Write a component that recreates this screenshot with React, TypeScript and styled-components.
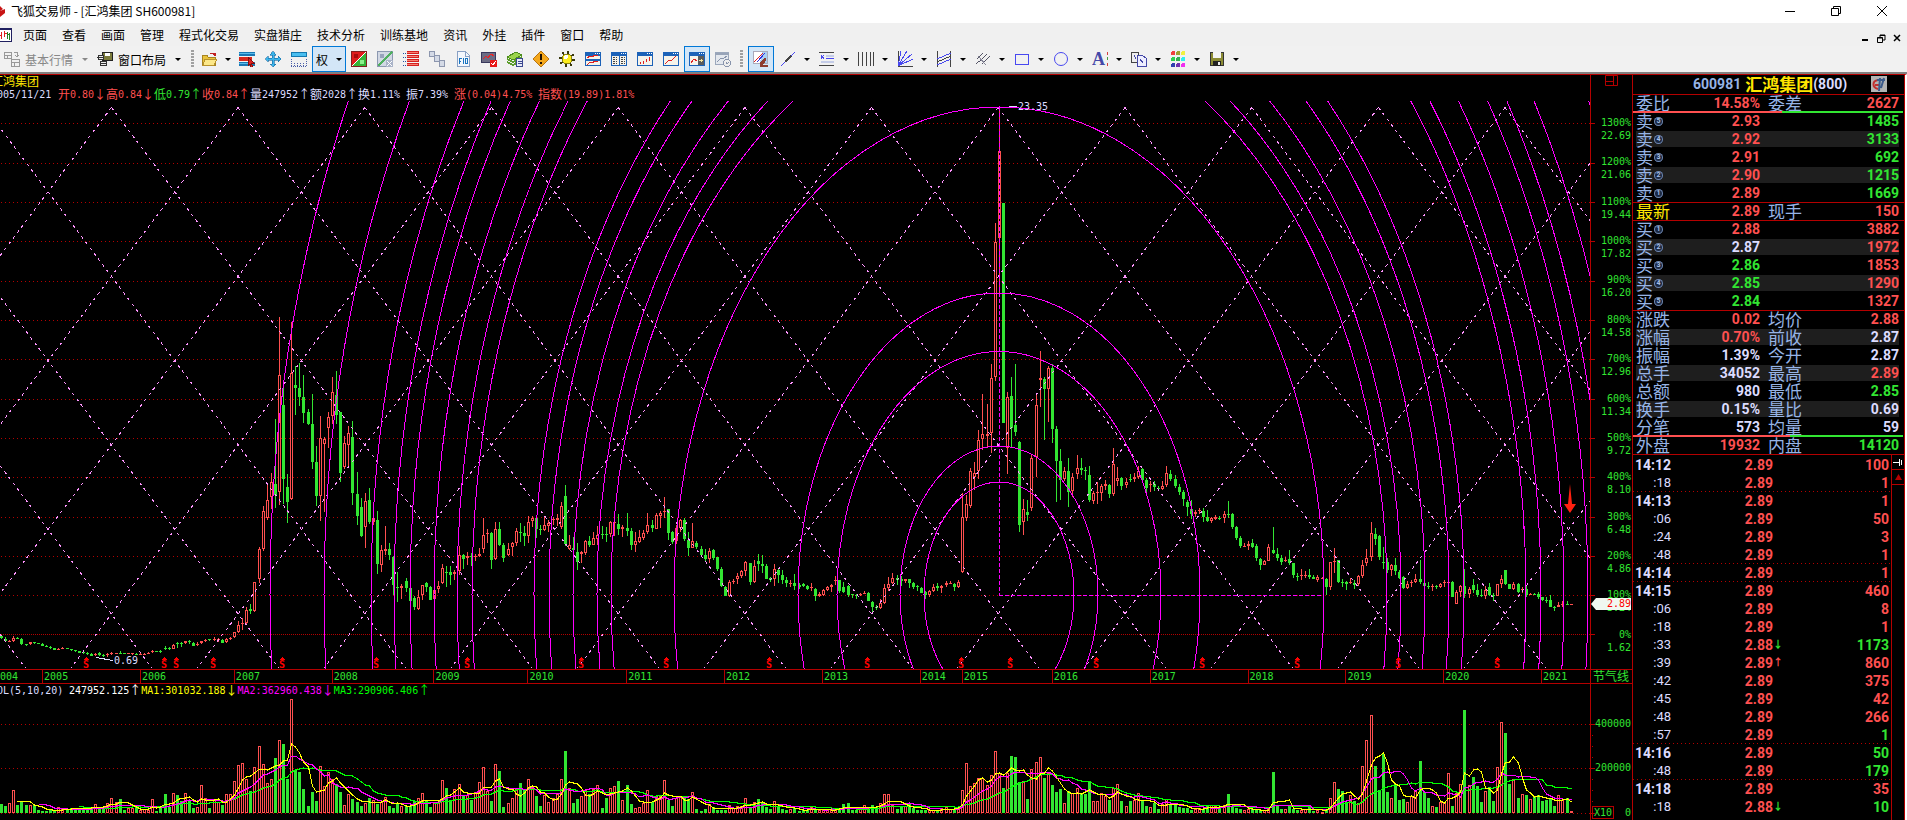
import React from 'react';
import styled, { createGlobalStyle } from 'styled-components';

/* ---------- palette ---------- */
const RED = '#ff5050';
const GREEN = '#32e632';
const PALE = '#dcdcff';
const BLUE = '#96b4e6';
const FRAME = '#b40000';
const MAGENTA = '#ff00ff';
const CJK = '"Noto Sans CJK SC", sans-serif';
const MONO = '"DejaVu Sans Mono", "Noto Sans CJK SC", monospace';
const tones = { red: RED, green: GREEN, pale: PALE, blue: BLUE, yellow: '#ffe600', gold: '#ffff00', magenta: MAGENTA, lime: '#00ff00', white: '#ffffff' };
type Tone = keyof typeof tones;

/* ---------- half-month bars: colour, high, body top, body bottom, low, volume ---------- */
type YearData = { year: string; x: number; bars: string };
const YEARS: YearData[] = [
  { year: '2004', x: 1, bars: 'g588 588 594 598 27,g592 596 603 606 21,r600 603 604 607 30,r588 595 602 606 68,g591 594 596 598 25,g594 597 612 614 32,g611 612 615 618 24,r606 607 613 615 23,g605 607 609 612 23,g608 609 611 612 9' },
  { year: '2005', x: 42, bars: 'g609 612 617 618 6,g615 617 620 622 6,g618 620 624 626 9,g623 625 629 630 5,r624 626 629 630 17,r621 624 627 628 15,g623 624 627 628 11,g626 627 630 632 16,g629 631 634 636 12,g632 634 638 639 15,g635 637 640 641 15,g637 639 642 645 12,g640 642 647 648 14,r639 641 645 647 28,g636 640 646 648 19,g642 645 648 650 14,r640 643 646 650 29,r636 640 642 644 44,r638 640 642 643 34,g634 639 641 642 42,g638 639 641 642 9,r638 640 642 643 14,r638 640 642 644 14,g639 641 643 644 18' },
  { year: '2006', x: 140, bars: 'r640 642 644 645 8,r640 642 644 645 12,r637 639 641 643 10,r630 633 637 640 41,g632 633 636 637 6,g630 633 635 638 15,g617 624 627 630 56,g621 624 627 629 18,r613 616 626 628 59,g605 609 613 625 53,g606 609 612 620 37,r602 604 608 612 59,g600 603 606 611 35,g606 608 617 618 15,r606 611 616 618 17,r602 604 608 612 83,r596 600 604 607 44,g596 598 600 603 15,r591 596 599 602 41,r595 598 600 605 34,g596 600 608 610 24,r594 597 607 609 56,r590 593 598 600 56' },
  { year: '2007', x: 234, bars: 'r575 577 592 595 95,r543 556 577 580 143,r534 549 552 570 149,r501 510 548 552 103,g492 507 513 522 66,r425 427 514 516 137,r320 328 418 428 200,r198 213 326 334 147,r131 181 233 240 89,r98 126 172 208 103,g-62 133 164 205 165,r-369 -195 157 195 218,g-174 -105 117 192 207,g101 141 185 248 102,r-353 -200 176 181 341,g-222 -165 -157 -75 128,g-231 -156 -130 -102 123,g-195 -129 -82 -52 72,g-93 -84 -49 -46 21,g-138 -48 66 86 63,g18 66 168 198 36,r-72 -6 167 243 140,r-10 -3 11 215 81,r-84 -69 -37 23 123' },
  { year: '2008', x: 332, bars: 'r-189 -143 -71 -47 101,g-207 -135 -76 -49 87,g-84 -84 98 126 63,r-12 9 80 88 23,r-42 -21 14 78 56,g-57 -9 158 194 42,g96 162 228 255 33,g173 202 288 291 21,r158 183 261 324 29,g144 180 246 252 45,r219 233 246 256 39,g213 240 372 402 27,r314 330 375 396 32,r257 328 332 345 47,g309 327 345 360 21,g348 350 434 465 15,g395 441 443 486 29,r431 438 445 476 20,g414 423 444 455 21,g420 444 482 488 21,g467 474 501 510 35,r450 470 508 510 46,r434 436 465 480 59,g426 429 441 456 39,g437 441 480 480 18' },
  { year: '2009', x: 434, bars: 'r443 450 477 480 29,r423 438 448 459 30,r371 384 430 432 98,g378 396 398 441 75,g377 396 405 435 39,r390 396 403 420 71,r318 346 394 405 86,g341 344 357 387 51,r336 348 354 375 55,g339 347 350 378 39,r342 347 350 362 63,r324 341 347 352 92,r234 285 328 339 137,r266 280 283 309 65,g276 279 359 387 36,r246 266 356 360 146,g245 266 315 318 126,g309 314 354 366 18,r310 326 344 348 29,r305 309 322 348 44,r264 273 310 317 71,g248 276 279 306 90,g257 279 288 317 71' },
  { year: '2010', x: 528, bars: 'r227 246 287 308 101,r228 235 244 261 76,g233 235 267 294 51,g254 266 269 285 21,r228 255 271 273 53,r240 248 258 275 33,r231 236 240 255 44,r222 235 240 258 57,r185 198 261 267 101,g135 168 312 318 186,r285 314 326 329 74,g290 324 330 360 30,g309 336 366 389 42,r333 337 341 368 50,r300 303 339 345 69,g288 302 315 322 57,r276 294 314 315 71,r258 284 296 315 83,g257 281 284 297 15,g261 282 286 306 45,r243 245 283 290 74,r242 245 250 288 80,g222 252 267 285 96,r254 262 268 291 39' },
  { year: '2011', x: 627, bars: 'g218 264 272 288 84,g263 273 315 330 27,r275 304 315 335 14,r269 291 307 308 17,r269 280 294 300 29,r219 255 276 282 68,g239 254 264 275 32,r219 225 266 267 50,r212 219 227 264 51,r170 212 216 233 98,g207 207 279 300 39,g272 276 306 312 21,r255 264 302 311 44,r237 240 264 275 47,g235 239 296 303 45,g276 300 324 348 42,r249 303 323 324 62,g303 309 321 326 12,g319 327 345 350 6,g326 345 358 366 12,r323 333 356 369 26,g326 330 353 360 18,g350 350 387 393 9,g380 387 438 440 9' },
  { year: '2012', x: 725, bars: 'g438 440 467 468 9,r419 427 467 470 23,r417 424 427 432 14,r399 408 416 432 20,r390 394 407 413 20,r362 366 394 408 44,g368 369 427 435 15,r361 378 426 428 32,g342 363 372 392 41,g345 372 378 399 33,g371 378 416 418 18,g411 414 419 425 12,r372 388 416 437 35,g386 390 405 429 21,g390 405 420 433 12,g411 420 430 441 9,r420 428 432 440 11,g402 428 438 450 15,g430 434 442 446 6,g429 432 438 441 9,g434 438 447 450 9,r428 441 444 452 17,g444 446 468 483 9,r455 461 468 471 9' },
  { year: '2013', x: 823, bars: 'r446 450 464 467 11,r437 441 450 452 9,r432 435 440 455 12,r408 420 422 435 11,g420 420 452 458 12,g426 441 455 460 28,g434 437 464 470 30,g461 462 466 473 9,g461 464 466 476 9,r458 461 465 468 15,r453 458 460 462 23,g456 458 482 484 12,g483 485 500 518 24,g496 500 504 509 18,r478 488 503 506 29,r432 444 488 492 56,r411 432 444 452 56,r399 414 430 433 23,g405 413 420 434 12,g408 418 424 438 20,r416 418 422 430 21,g417 418 430 444 27,g426 429 441 447 15,g435 438 441 453 9' },
  { year: '2014', x: 921, bars: 'g442 445 458 460 9,g452 455 466 476 9,r450 454 465 470 9,r432 442 453 456 10,g430 438 444 453 9,r434 438 443 459 14,r424 429 436 440 18,r424 429 431 433 12,g428 432 441 452 12,r420 426 440 443 17' },
  { year: '2015', x: 962, bars: 'r160 232 396 398 68,r165 192 234 242 149,r84 94 198 204 80,r67 99 110 150 89,r-30 0 94 116 104,r-139 -17 -2 30 104,r-109 -17 -13 25 84,r-228 -185 -20 38 113,r-651 -593 -188 -177 185,r-997 -866 -605 -440 119,g-711 -711 -52 -52 75,r-144 -129 25 101 119,g-189 -132 -37 23 171,g-228 -45 -25 -12 168,g3 6 254 275 93,r177 207 246 284 95,g180 216 225 242 42,r46 53 203 212 131,r-138 -105 50 111 152,r-267 -185 -179 -100 167,g-190 -183 -154 0 105,r-222 -215 -154 -55 119' },
  { year: '2016', x: 1052, bars: 'g-228 -216 -34 8 84,g-42 -33 63 186 63,g27 64 120 180 72,r80 94 116 122 29,g55 94 155 201 65,r98 110 152 170 59,r45 85 103 116 74,g54 85 90 105 57,g82 90 92 120 57,g78 105 180 185 94,r154 158 182 191 35,r126 155 160 192 35,r132 138 160 183 59,r120 133 139 150 50,g133 135 162 175 39,r24 73 161 168 74,r82 115 122 138 87,g112 115 138 150 36,r114 126 136 144 20,g102 117 119 126 35,r100 111 116 126 38,r79 92 110 117 59,g84 88 120 125 39,g114 121 144 155 21' },
  { year: '2017', x: 1150, bars: 'r124 132 134 155 17,g123 132 140 153 29,g138 144 147 153 12,r123 137 147 150 26,r78 100 135 140 41,g90 101 116 122 27,g105 118 138 144 24,g132 140 156 165 18,g150 157 177 198 15,g180 186 200 228 15,g180 207 222 237 9,r210 216 222 230 11,r204 210 212 222 14,g204 213 231 245 12,g210 232 242 246 24,r230 234 243 249 23,r225 232 236 240 20,g228 233 236 240 18,r213 222 235 249 23,g183 222 226 235 57,g219 222 261 266 21,g258 261 293 300 15,g288 293 318 323 12,r309 318 320 321 9' },
  { year: '2018', x: 1248, bars: 'r304 312 318 330 12,g297 310 320 324 12,g312 318 354 362 9,g354 356 375 390 9,r360 363 374 375 8,r312 321 362 364 11,g261 330 339 342 123,g324 342 354 362 21,g345 354 366 374 12,r350 360 364 366 12,g330 357 369 376 23,g368 369 405 414 12,g399 408 411 423 9,r387 404 408 420 9,r393 404 407 414 12,g387 405 410 416 18,g404 411 416 418 6,r405 411 420 426 8,r411 414 416 418 3,g415 417 440 465 9,r366 367 441 450 44,r324 362 366 398 92,g360 360 427 430 72,g418 426 429 441 65' },
  { year: '2019', x: 1346, bars: 'g423 427 431 450 33,r414 426 429 432 53,g420 429 434 446 36,r405 408 431 438 29,r360 374 408 414 140,r328 354 370 378 218,r246 280 350 362 293,g264 282 297 315 141,g285 288 351 360 69,g320 366 369 387 178,g354 367 390 400 63,r372 376 390 408 44,g354 375 392 405 87,g390 396 414 418 39,g408 411 443 447 42,r423 432 444 447 32,r420 427 430 440 50,r402 416 427 430 68,g360 417 427 432 156,g425 429 438 441 63,g425 437 440 447 45,r432 438 440 452 20,g435 438 441 446 18,r430 432 440 444 32' },
  { year: '2020', x: 1444, bars: 'r421 426 430 441 30,r411 426 428 430 119,g423 426 470 470 21,r450 456 491 491 59,r436 438 456 471 86,g387 438 462 474 309,r441 447 462 474 83,g417 434 449 458 108,g432 450 464 470 81,g447 464 466 471 33,r438 449 467 476 65,g429 441 466 468 78,g460 465 469 482 36,r431 433 467 468 137,r405 417 432 444 272,g390 390 432 436 240,g431 432 446 448 87,r426 432 448 450 101,g429 432 456 459 45,r440 448 450 460 56,g438 447 464 471 54,r459 462 464 466 41,g459 462 464 466 48,g456 462 470 476 54' },
  { year: '2021', x: 1542, bars: 'g471 472 480 483 36,g471 480 483 489 39,g465 480 500 500 45,g497 501 505 513 21,r486 495 500 501 53,r483 491 494 500 40,g483 491 494 495 45,r492 492 494 494 5' },
];

const PANE_W = 1590;
const STEP = 49 / 12;
const BASE = 813;
const toY = (v: number) => Math.round(440 + v / 3);

const BARS = YEARS.flatMap(({ x, bars }) =>
  bars.split(',').map((item, i) => {
    const [high, top, bottom, low, volume] = item.slice(1).split(' ').map(Number);
    return { up: item[0] === 'r', x: Math.round(x + i * STEP), high: toY(high), top: toY(top), bottom: toY(bottom), low: toY(low), volume };
  })
);

const average = (n: number) =>
  BARS.slice(n - 1)
    .map((bar, i) => {
      const sum = BARS.slice(i, i + n).reduce((total, b) => total + b.volume, 0);
      return `${bar.x + 0.5},${Math.round(BASE - sum / n / 3)}`;
    })
    .join(' ');

const LEVELS = [
  ['1300%', '22.69'], ['1200%', '21.06'], ['1100%', '19.44'], ['1000%', '17.82'], ['900%', '16.20'], ['800%', '14.58'], ['700%', '12.96'],
  ['600%', '11.34'], ['500%', '9.72'], ['400%', '8.10'], ['300%', '6.48'], ['200%', '4.86'], ['100%', '3.24'], ['0%', '1.62'],
];
const GRID_Y = [123, 163, 202, 241, 281, 320, 359, 399, 438, 477, 517, 556, 595, 634];
const RADII = [75, 99, 162, 201, 325, 388, 402, 426, 450, 465, 527, 542, 565, 589, 605, 628, 675, 729];
const DIVIDENDS = [86, 164, 176, 213, 282, 376, 467, 581, 666, 769, 867, 961, 1010, 1096, 1202, 1297, 1398, 1497];

/* ---------- shell ---------- */
const Global = createGlobalStyle`
  * { box-sizing: border-box; }
  body { margin: 0; background: #fff; font-family: ${CJK}; }
  button { font: inherit; color: inherit; border: 0; background: none; padding: 0; }
`;
const Window = styled.div`
  display: flex; flex-direction: column; height: 100vh; overflow: hidden; font-size: 12px; color: #000;
`;
const TitleBar = styled.header`
  display: flex; align-items: flex-start; flex: 0 0 23px; background: #fff;
`;
const TitleMark = styled.svg`
  margin-top: 5px;
`;
const AppTitle = styled.h1`
  flex: 1; margin: 0 0 0 6px; font-size: 12px; font-weight: 400; line-height: 22px;
`;
const CaptionButton = styled.button`
  display: grid; place-items: center; width: 46px; height: 21px;
  &:last-child { margin-right: 2px; }
`;
const MenuBar = styled.nav`
  display: flex; align-items: center; flex: 0 0 23px; background: #f0f0f0; gap: 15px;
`;
const MenuMark = styled.svg`
  margin-right: -4px;
`;
const MenuItem = styled.button`
  line-height: 22px; white-space: nowrap;
`;
const ChildControls = styled.div`
  display: flex; align-items: center; margin-left: auto; padding: 7px 2px 0 0;
`;
const ChildButton = styled.button`
  display: grid; place-items: center; width: 16px; height: 16px;
`;
const Toolbar = styled.div`
  display: flex; align-items: center; flex: 0 0 28px; background: #f1f1f1; border-bottom: 2px solid #808080;
`;
const ToolGroup = styled.div`
  display: flex; align-items: center;
`;
const Tool = styled.button<{ $on?: boolean; $w?: number }>`
  display: flex; align-items: center; justify-content: ${(p) => (p.$w ? 'flex-end' : 'center')}; gap: 4px; width: ${(p) => p.$w ?? 26}px; height: 26px;
  ${(p) => (p.$on ? 'background: #d3e6f7; border: 1px solid #0078d7;' : '')}
  svg { flex: none; }
`;
const TextTool = styled(Tool)<{ $dim?: boolean }>`
  justify-content: flex-start; gap: 5px; padding-left: 4px; white-space: nowrap; color: ${(p) => (p.$dim ? '#888' : '#000')};
`;
const Caret = styled.i<{ $dim?: boolean }>`
  flex: none; margin: 0 3px 0 4px; border: 3px solid transparent; border-top-color: ${(p) => (p.$dim ? '#888' : '#000')}; border-bottom: 0;
`;
const Grip = styled.span`
  width: 3px; height: 18px; margin: 0 5px 0 4px; background: repeating-linear-gradient(#a0a0a0 0 2px, transparent 2px 3px);
`;

/* ---------- workspace ---------- */
const Workspace = styled.main`
  display: flex; flex: 1; min-height: 0; border-top: 1px solid ${FRAME}; background: #000; border-right: 2px solid #fff;
`;
const Charts = styled.section`
  display: flex; flex-direction: column; flex: 1; min-width: 0;
`;
const Pane = styled.div<{ $fixed?: boolean }>`
  display: flex; flex: ${(p) => (p.$fixed ? '0 0 136px' : '1')}; min-height: 0;
`;
const Plot = styled.div`
  display: flex; flex-direction: column; flex: 1; min-width: 0; border-right: 1px solid ${FRAME};
`;
const Drawing = styled.svg`
  display: block; width: 100%; flex: 1; min-height: 0; overflow: visible;
`;
const Clip = styled.div`
  overflow: hidden; flex: none;
`;
const Readout = styled.div`
  display: flex; margin-left: -9px; height: 13px; line-height: 12px; white-space: pre; color: ${PALE}; font-size: 12px;
`;
const Reading = styled.span<{ $tone: Tone; $w?: number }>`
  display: flex; flex: none; ${(p) => (p.$w ? `width: ${p.$w}px;` : '')} color: ${(p) => tones[p.$tone]};
`;
const Num = styled.span`
  font-family: ${MONO}; font-size: 10px; line-height: 14px;
`;
const Axis = styled.div`
  position: relative; flex: 0 0 42px; display: flex; flex-direction: column; border-right: 1px solid ${FRAME};
  color: ${GREEN}; font-family: ${MONO}; font-size: 10px; line-height: 13px; text-align: right;
`;
const LevelList = styled.div`
  flex: 1; display: grid; grid-template-rows: repeat(14, 1fr); padding: 29px 1px 2px 0;
`;
const Level = styled.div`
  display: flex; flex-direction: column;
`;
const PriceTag = styled.div`
  position: absolute; right: 1px; top: 523px; width: 40px; height: 12px; line-height: 12px; background: #f0f8f0; color: #f00;
  clip-path: polygon(0 50%, 5px 0, 100% 0, 100% 100%, 5px 100%);
`;
const AxisIcon = styled.div`
  display: flex; justify-content: center; height: 12px;
`;
const TimeAxis = styled.div`
  display: flex; flex: 0 0 15px; border: solid ${FRAME}; border-width: 1px 0; line-height: 12px; color: ${GREEN};
`;
const Years = styled.div`
  display: flex; flex: 1; min-width: 0; overflow: hidden; border-right: 1px solid ${FRAME};
`;
const Year = styled.span<{ $grow: number; $first: boolean }>`
  flex: ${(p) => p.$grow} 0 0; min-width: 0; padding-left: 1px; font-family: ${MONO}; font-size: 10px; line-height: 13px;
  ${(p) => (p.$first ? 'text-indent: -7px;' : `border-left: 1px solid ${FRAME};`)}
`;
const AxisName = styled.span`
  flex: 0 0 42px; padding-left: 2px; border-right: 1px solid ${FRAME};
`;
const VolumeScale = styled.div`
  flex: 1; display: flex; flex-direction: column; padding: 33px 1px 0 0;
`;
const VolumeLevel = styled.span`
  flex: 0 0 44px;
`;
const VolumeFoot = styled.div`
  display: flex; justify-content: space-between; padding: 1px 0 0 1px;
`;
const Unit = styled.span`
  border: 1px solid ${FRAME}; padding: 0 1px; line-height: 11px;
`;

/* ---------- quote panel ---------- */
const Quote = styled.aside`
  display: flex; flex-direction: column; flex: 0 0 272px; border-right: 1px solid ${FRAME}; color: ${PALE}; font-family: Roboto, ${CJK};
`;
const QuoteHead = styled.div`
  display: flex; align-items: center; flex: 0 0 20px; margin-bottom: -1px; padding: 0 17px 1px 60px; border-bottom: 1px solid ${FRAME};
  font-size: 14px; font-weight: 700; line-height: 18px;
`;
const Code = styled.span`
  color: ${BLUE}; margin-right: 4px;
`;
const StockName = styled.h2`
  margin: 0; color: #ffe600; font-size: 17px; font-weight: 700; line-height: 16px; font-family: ${CJK};
`;
const Sector = styled.span`
  flex: 1;
`;
const Sheet = styled.table<{ $line?: boolean }>`
  display: block; flex: none; border-bottom: ${(p) => (p.$line === false ? 0 : 1)}px solid ${FRAME}; margin-bottom: ${(p) => (p.$line === false ? 0 : -1)}px;
  tbody { display: block; }
`;
const SheetRow = styled.tr<{ $alt?: boolean }>`
  display: grid; grid-template-columns: 48px 76px 46px 1fr; align-items: center; height: 18px; padding: 1px 5px 1px 3px;
  background: ${(p) => (p.$alt ? '#1e1e1e' : 'transparent')}; background-clip: content-box;
`;
const Label = styled.th<{ $tone?: Tone }>`
  display: flex; align-items: center; padding: 0; text-align: left; font: 400 17px/16px ${CJK}; white-space: nowrap; color: ${(p) => tones[p.$tone ?? 'blue']};
`;
const SideLabel = styled(Label)`
  padding-left: 8px;
`;
const Value = styled.td<{ $tone: Tone }>`
  padding: 0; text-align: right; font-size: 14px; font-weight: 700; line-height: 16px; color: ${(p) => tones[p.$tone]};
`;
const Rank = styled.span`
  width: 9px; height: 9px; margin-left: 1px; border-radius: 50%; background: #1c2a44; box-shadow: inset 0 0 0 1px #7088b0;
  color: #a8c0e8; font: 700 7px/9px Roboto, sans-serif; text-align: center;
`;
const Ratio = styled.div<{ $split: number }>`
  position: relative; flex: none; height: 2px; margin: -1px 1px -1px 0;
  background: linear-gradient(90deg, ${RED} ${(p) => p.$split}%, ${GREEN} 0);
`;
const TickArea = styled.div`
  display: flex; flex: 1; min-height: 0; margin-top: 1px;
`;
const TickTable = styled.table`
  display: block; flex: 1; overflow: hidden; padding-top: 1px;
  tbody { display: block; }
`;
const TickRow = styled.tr<{ $last?: boolean }>`
  display: grid; grid-template-columns: 38px 102px 12px 1fr; align-items: center; height: 18px; padding-right: 2px;
  ${(p) => (p.$last ? `background: repeating-linear-gradient(90deg, ${FRAME} 0 1px, transparent 1px 4px) 0 100% / 100% 1px no-repeat;` : '')}
`;
const Time = styled.th<{ $minute: boolean }>`
  padding: 0; text-align: right; color: ${PALE}; line-height: 18px; font-size: ${(p) => (p.$minute ? 14 : 13)}px; font-weight: ${(p) => (p.$minute ? 700 : 400)};
`;
const Trend = styled(Value)`
  text-align: left; font-size: 10px;
`;
const Scroll = styled.div`
  flex: 0 0 13px; border-left: 1px solid ${FRAME};
`;
const ScrollButton = styled.button`
  display: grid; place-items: center; width: 12px; height: 15px; border-bottom: 1px solid ${FRAME};
`;

/* ---------- toolbar icons ---------- */
const Icon: React.FC<{ children: React.ReactNode }> = ({ children }) => (
  <svg width="16" height="16" viewBox="0 0 16 16" fill="none" shapeRendering="crispEdges" aria-hidden="true">{children}</svg>
);
const WinFrame = () => (
  <>
    <rect x="0.5" y="1.5" width="15" height="13" fill="#f6f3ea" stroke="#1c62b8" />
    <path d="M0 3h16" stroke="#1c62b8" strokeWidth="3" />
    <path d="M10 2.5h1M12 2.5h1M14 2.5h1" stroke="#fff" />
  </>
);
const icons: Record<string, React.ReactNode> = {
  grey: <Icon><path d="M.5 1.5h7v6h-7zM.5 4h7M3 4v3M10 1.500h3v4M11 4l2 2 2-2M7.500 8.500h8v7h-8zM7.500 11h8M10 11v4" stroke="#999" /></Icon>,
  windows: <Icon><path d="M5.500 1.500h10v8h-10z" fill="#7c7c3c" stroke="#222" /><path d="M8 2h5v3H8z" fill="#fff" /><path d="M1.500 4.500h5v4h-5zM3.500 10.500h6v4h-6z" fill="#eee" stroke="#333" /><path d="M0 6h7M4 12h5" stroke="#333" /></Icon>,
  folder: <Icon><path d="M1 14V4h5l1 2h7v8z" fill="#e8c33c" stroke="#a88420" /><path d="M2 14l2-6h12l-3 6z" fill="#fce889" stroke="#b8922c" /><path d="M9 2h4l1 2M12 3l2 2 1-3" stroke="#c02020" /></Icon>,
  rows: <Icon><path d="M0 3h16M0 13h16" stroke="#1978b4" strokeWidth="4" /><path d="M0 8h13" stroke="#d8281c" strokeWidth="4" /><path d="M0 2.500h16M0 12.500h12" stroke="#58bcec" /><path d="M9 6l6 6h-3l2 4h-2l-1-3-2 2z" fill="#e02020" stroke="#801010" /></Icon>,
  move: <Icon><path d="M8 0l3 4H9v3h4V5l3 3-3 3V9H9v4h2l-3 3-3-3h2V9H3v2L0 8l3-3v2h4V4H5z" fill="#3ab4ea" stroke="#1468a0" strokeWidth=".6" /></Icon>,
  ruler: <Icon><path d="M.5 1.500h15v4H.5z" fill="#4abef0" stroke="#1478b0" /><path d="M.5 8v7M15.500 8v7M0 15.500h16M3.500 12v3M6.500 12v3M9.500 12v3M12.500 12v3" stroke="#4a5ea8" strokeDasharray="1 1" /></Icon>,
  percent: <Icon><path d="M0 0h16L0 16z" fill="#e01c1c" /><path d="M16 0v16H0z" fill="#34b438" /><path d="M.5.5h15v15H.5z" stroke="#802020" /><path d="M15 1L1 15" stroke="#fff" /><circle cx="5" cy="5" r="2.500" fill="#a80c0c" /><circle cx="11" cy="11" r="2.500" fill="#8cf08c" /></Icon>,
  percentOff: <Icon><path d="M.5.5h15v15H.5z" fill="#d2d8e4" stroke="#8c98b0" /><path d="M15 1L1 15" stroke="#50b060" strokeWidth="1.500" /><circle cx="5" cy="5" r="2.500" fill="#98a4bc" /><path d="M9 9h7v7H9z" fill="#aab4c8" /><path d="M10 10l5 5M15 10l-5 5" stroke="#fff" /></Icon>,
  list: <Icon><path d="M0 2.500h3M0 6.500h3M0 10.500h3M0 14.500h3" stroke="#2054a0" strokeDasharray="1 1" /><path d="M4 1.500h12M4 5.500h12M4 9.500h12M4 13.500h12" stroke="#d42020" strokeWidth="3" /><path d="M4 1.500h11M4 5.500h11M4 9.500h11M4 13.500h11" stroke="#f88070" /></Icon>,
  cubes: <Icon><g fill="#d4dae6" stroke="#8c96ae"><path d="M.5.500h5v5h-5z" /><path d="M5.500 4.500h5v6h-5z" /><path d="M10.500 9.500h5v6h-5z" /></g></Icon>,
  f10: <Icon><path d="M2.500.5h8l4 4v11h-12z" fill="#f2f6fc" stroke="#88a0c4" /><path d="M10 0v5h5" stroke="#88a0c4" /><path d="M4.500 13V7M4 7.500h3M4 10.500h2M8.500 7v6M10.500 7.500h2v5h-2z" stroke="#1874c0" /></Icon>,
  monitor: <Icon><path d="M.5 1.500h14v10H.5z" fill="#6c6c84" stroke="#38385c" /><path d="M2 8l3-3 2 2 3-4 3 2" stroke="#f02020" /><path d="M9 9h7v7H9z" fill="#e81818" /><path d="M10 12l2 2 3-4" stroke="#fff" /></Icon>,
  books: <Icon><path d="M0 6l9-5 6 3-9 5z" fill="#9cd44c" stroke="#4c8c1c" /><path d="M0 8l6 3 9-5M0 11l6 3 5-3" stroke="#5c9c2c" strokeWidth="2" /><path d="M9.500 7.500h6v8h-6z" fill="#e8ecf8" stroke="#3c4890" /><path d="M11 10.500h4M11 12.500h4" stroke="#3c4890" /></Icon>,
  warning: <Icon><path d="M8 0l8 8-8 8-8-8z" fill="#f4a81c" stroke="#b87410" /><path d="M8 3v6M8 11v2" stroke="#201000" strokeWidth="2" /></Icon>,
  sun: <Icon><circle cx="8" cy="8" r="6.500" stroke="#38380c" strokeWidth="3" strokeDasharray="2 3" /><circle cx="8" cy="8" r="5" fill="#fcec1c" stroke="#8c840c" /><circle cx="7" cy="6" r="2" fill="#fff" /></Icon>,
  split: <Icon><WinFrame /><path d="M0 9h16" stroke="#1c62b8" strokeWidth="2" /><path d="M2 7l3-2 2 1 3-2h3M2 14l3-3 2 1 3-2h3" stroke="#e02020" /></Icon>,
  table: <Icon><WinFrame /><path d="M8 4v11" stroke="#1c62b8" /><path d="M2 6.500h4M2 8.500h4M2 10.500h4M2 12.500h4M10 6.500h4M10 8.500h4M10 10.500h4M10 12.500h4" stroke="#444" strokeDasharray="2 1" /></Icon>,
  bars: <Icon><WinFrame /><path d="M3.500 13v-2M6.500 13v-3M9.500 11V8M12.500 10V6" stroke="#e02020" /></Icon>,
  line: <Icon><WinFrame /><path d="M2 13l4-4 2 1 5-5" stroke="#e02020" /></Icon>,
  side: <Icon><WinFrame /><path d="M2 12l3-4 3 2" stroke="#e02020" /><path d="M9 5h6v9H9z" fill="#5c5c5c" /><path d="M10 9.500h4M12.500 8v3" stroke="#f8e8a0" /></Icon>,
  clock: <Icon><path d="M.5 1.500h13v12H.5z" fill="#e4e8ee" stroke="#9ca8bc" /><path d="M0 3h14" stroke="#98a4b8" strokeWidth="2" /><path d="M2 11l4-4 2 1 4-3" stroke="#8894ac" /><circle cx="12" cy="12" r="3.500" fill="#eee" stroke="#8894ac" /><path d="M11 11l1 2 2-2" stroke="#8894ac" /></Icon>,
  draw: <Icon><path d="M.5.5h14v12H.5z" fill="#fff" stroke="#aab" /><path d="M9 1h5v11H7z" fill="#a8d0f4" /><path d="M1 11l9-9" stroke="#e02020" /><path d="M4 11l8-9" stroke="#3030e0" /><path d="M7 12l5-5 1 2-4 5h5v1H7z" fill="#8c3c30" stroke="#8c3c30" /></Icon>,
  segment: <Icon><path d="M1 15L15 1" stroke="#4848f0" /><path d="M5 11L11 5" stroke="#444" strokeWidth="2" /></Icon>,
  levels: <Icon><path d="M0 1.500h15M0 14.500h15" stroke="#444" /><path d="M2 4l3 4M5 4L2 8M7 7.500h8" stroke="#4848f0" /><path d="M7 5h8M2 11h13" stroke="#c4cce8" strokeWidth="2" /></Icon>,
  verticals: <Icon><path d="M.5 1v14M4.500 1v14M8.500 1v14M12.500 1v14M15.500 1v14" stroke="#444" /></Icon>,
  fan: <Icon><path d="M1.500 0v15M1 15.500h15" stroke="#444" /><path d="M1 15L4 0M1 15L10 0M1 15L15 3M1 15l15-7" stroke="#4848f0" /></Icon>,
  channel: <Icon><path d="M1.500 0v16M14.500 0v16" stroke="#444" /><path d="M1 8l14-6M1 14l14-6" stroke="#4848f0" /><path d="M1 11l14-6" stroke="#444" /></Icon>,
  pitchfork: <Icon><path d="M2 8l6-6M4 11l8-8M7 13l8-8M1 13l3-3" stroke="#556" /><path d="M3 5l8 9" stroke="#889" /></Icon>,
  box: <Icon><path d="M1.500 3.500h13v10h-13z" stroke="#4848f0" /></Icon>,
  circle: <Icon><circle cx="8" cy="8" r="6.500" stroke="#4848f0" shapeRendering="auto" /></Icon>,
  letter: <Icon><text x="0" y="14" fontFamily="Liberation Serif" fontSize="18" fontWeight="700" fill="#4448a8">A</text><path d="M15.500 1v3M15.500 12v3" stroke="#d04040" /><path d="M15.500 6v3" stroke="#40a040" /></Icon>,
  copy: <Icon><path d="M.5 1.500h7v10h-7z" fill="#eee" stroke="#444" /><path d="M6.500 4.500h5l4 3v8h-9z" fill="#eef" stroke="#4448a8" /><path d="M3 4l2 4M9 8l3 4" stroke="#4448a8" /></Icon>,
  dots: <Icon>{[['#f04040', '#a0a030', '#f0f040'], ['#30d050', '#30b050', '#30f0f0'], ['#3040b0', '#7030b0', '#f030f0']].flatMap((row, y) => row.map((c, x) => <path key={`${x}${y}`} d={`M${x * 5 + 1} ${y * 6 + 2}h4M${x * 5 + 3} ${y * 6}v4`} stroke={c} strokeWidth="3" />))}</Icon>,
  save: <Icon><path d="M1.500 1.500h13v13h-13z" fill="#8c8c34" stroke="#333" /><path d="M4 1h8v6H4z" fill="#f4f4f4" /><path d="M4 10h8v5H4z" fill="#222" /><path d="M9 11h2v3H9z" fill="#eee" /></Icon>,
};

/* ---------- content ---------- */
const MENUS = ['页面', '查看', '画面', '管理', '程式化交易', '实盘猎庄', '技术分析', '训练基地', '资讯', '外挂', '插件', '窗口', '帮助'];
const VIEW_TOOLS = ['percent', 'percentOff', 'list', 'cubes', 'f10', 'monitor', 'books', 'warning', 'sun', 'split', 'table', 'bars', 'line', 'side', 'clock'];
const DRAW_TOOLS = ['segment', 'levels', 'verticals', 'fan', 'channel', 'pitchfork', 'box', 'circle', 'letter', 'copy', 'dots', 'save'];

const DAY: [string, string, string, Tone, number][] = [
  ['开', '0.80', '↓', 'red', 48], ['高', '0.84', '↓', 'red', 48], ['低', '0.79', '↑', 'green', 48], ['收', '0.84', '↑', 'red', 48],
  ['量', '247952', '↑', 'pale', 60], ['额', '2028', '↑', 'pale', 48], ['换', '1.11%', '', 'pale', 48], ['振', '7.39%', '', 'pale', 48],
  ['涨', '(0.04)4.75%', '', 'red', 84], ['指数', '(19.89)1.81%', '', 'red', 98],
];
const AVERAGES: [string, string, Tone][] = [
  ['247952.125', '↑', 'white'], ['MA1:301032.188', '↓', 'gold'], ['MA2:362960.438', '↓', 'magenta'], ['MA3:290906.406', '↑', 'lime'],
];
type Book = [string, number, string, Tone, string, Tone];
const ASKS: Book[] = [
  ['卖', 5, '2.93', 'red', '1485', 'green'], ['卖', 4, '2.92', 'red', '3133', 'green'], ['卖', 3, '2.91', 'red', '692', 'green'],
  ['卖', 2, '2.90', 'red', '1215', 'green'], ['卖', 1, '2.89', 'red', '1669', 'green'],
];
const BIDS: Book[] = [
  ['买', 1, '2.88', 'red', '3882', 'red'], ['买', 2, '2.87', 'pale', '1972', 'red'], ['买', 3, '2.86', 'green', '1853', 'red'],
  ['买', 4, '2.85', 'green', '1290', 'red'], ['买', 5, '2.84', 'green', '1327', 'red'],
];
type Pair = [string, string, Tone, string, string, Tone];
const STATS: Pair[] = [
  ['涨跌', '0.02', 'red', '均价', '2.88', 'red'], ['涨幅', '0.70%', 'red', '前收', '2.87', 'pale'], ['振幅', '1.39%', 'pale', '今开', '2.87', 'pale'],
  ['总手', '34052', 'pale', '最高', '2.89', 'red'], ['总额', '980', 'pale', '最低', '2.85', 'green'], ['换手', '0.15%', 'pale', '量比', '0.69', 'pale'],
  ['分笔', '573', 'pale', '均量', '59', 'pale'],
];
const TICKS: [string, string, string, string, Tone, boolean?][] = [
  ['14:12', '2.89', '', '100', 'red'], [':18', '2.89', '', '1', 'red', true], ['14:13', '2.89', '', '1', 'red'], [':06', '2.89', '', '50', 'red'],
  [':24', '2.89', '', '3', 'red'], [':48', '2.89', '', '1', 'red', true], ['14:14', '2.89', '', '1', 'red', true], ['14:15', '2.89', '', '460', 'red'],
  [':06', '2.89', '', '8', 'red'], [':18', '2.89', '', '1', 'red'], [':33', '2.88', '↓', '1173', 'green'], [':39', '2.89', '↑', '860', 'red'],
  [':42', '2.89', '', '375', 'red'], [':45', '2.89', '', '42', 'red'], [':48', '2.89', '', '266', 'red'], [':57', '2.89', '', '1', 'green', true],
  ['14:16', '2.89', '', '50', 'green'], [':48', '2.89', '', '179', 'green', true], ['14:18', '2.89', '', '35', 'red'], [':18', '2.88', '↓', '10', 'green'],
];

const PairRow = ({ row, alt, tone }: { row: Pair; alt?: boolean; tone?: Tone }) => (
  <SheetRow $alt={alt}>
    <Label $tone={tone}>{row[0]}</Label><Value $tone={row[2]}>{row[1]}</Value>
    <SideLabel>{row[3]}</SideLabel><Value $tone={row[5]}>{row[4]}</Value>
  </SheetRow>
);
const BookRows = ({ rows }: { rows: Book[] }) => (
  <Sheet>
    <tbody>
      {rows.map(([side, rank, price, tone, amount, amountTone], i) => (
        <SheetRow key={rank} $alt={i % 2 === 1}>
          <Label>{side}<Rank>{rank}</Rank></Label><Value $tone={tone}>{price}</Value><td /><Value $tone={amountTone}>{amount}</Value>
        </SheetRow>
      ))}
    </tbody>
  </Sheet>
);

const PriceDrawing = () => {
  const lattice: string[] = [];
  for (let k = -5; k < 19; k++) {
    const x = 111.4 + 126.7 * k;
    lattice.push(`M${x} 107.500l420.700 560.500M${x} 107.500l-420.700 560.500`);
  }
  return (
    <Drawing viewBox={`0 101 ${PANE_W} 568`} preserveAspectRatio="none" shapeRendering="crispEdges" fill="none" role="img" aria-label="K线图">
      <defs><clipPath id="plot"><rect x="0" y="101" width={PANE_W} height="568" /></clipPath></defs>
      {GRID_Y.map((y) => <path key={y} d={`M1 ${y + 0.5}H${PANE_W}`} stroke={FRAME} strokeDasharray={y === 634 ? '1 1' : '1 3'} />)}
      {GRID_Y.map((y) => <path key={y} d={`M${PANE_W} ${y + 0.5}h5`} stroke={FRAME} />)}
      <g clipPath="url(#plot)">
        {BARS.map((b) => (
          <g key={b.x} fill={b.up ? RED : GREEN}>
            <rect x={b.x} y={b.high} width="1" height={Math.max(1, b.low - b.high)} />
            {b.up && b.bottom - b.top > 1
              ? <rect x={b.x - 0.5} y={b.top + 0.5} width="2" height={b.bottom - b.top - 1} fill="#000" stroke={RED} />
              : <rect x={b.x - 1} y={b.top} width="3" height={Math.max(1, b.bottom - b.top)} />}
          </g>
        ))}
        <path d={lattice.join('')} stroke="#ff96ff" strokeDasharray="3 4" />
        {RADII.map((r) => <ellipse key={r} cx="999" cy="594.500" rx={r} ry={r * 1.5} stroke={MAGENTA} />)}
        <path d="M999.500 107V595M999 595.500H1324" stroke={MAGENTA} strokeDasharray="4 2" />
      </g>
      <g fill="#ff0000" fontFamily="DejaVu Sans Mono" fontSize="10" fontWeight="700">
        {DIVIDENDS.map((x) => (
          <g key={x}><path d={`M${x} 657l3 3h-6z`} /><text x={x - 3} y="668">S</text></g>
        ))}
      </g>
      <path d="M1570 484l2 20h4l-6 9-6-9h4z" fill="#ff2010" shapeRendering="auto" />
      <path d="M1009 106.500h8M96 657.500l17 3" stroke={PALE} />
      <g fill={PALE} fontFamily="DejaVu Sans Mono" fontSize="10"><text x="1018" y="110">23.35</text><text x="114" y="664">0.69</text></g>
    </Drawing>
  );
};

const VolumeDrawing = () => (
  <Drawing viewBox={`0 697 ${PANE_W} 123`} preserveAspectRatio="none" shapeRendering="crispEdges" fill="none" role="img" aria-label="成交量">
    {[724, 768, 813].map((y) => (
      <g key={y} stroke={FRAME}><path d={`M1 ${y + 0.5}H${PANE_W}`} strokeDasharray="1 3" /><path d={`M${PANE_W} ${y + 0.5}h5`} /></g>
    ))}
    {[735, 746, 757, 779, 790, 801].map((y) => <path key={y} d={`M${PANE_W + 2} ${y + 0.5}h1`} stroke={FRAME} />)}
    {BARS.map((b) => {
      const height = Math.max(1, Math.round(b.volume / 3));
      return b.up
        ? <rect key={b.x} x={b.x - 0.5} y={BASE - height + 0.5} width="2" height={Math.max(1, height - 1)} fill="#000" stroke={RED} />
        : <rect key={b.x} x={b.x - 1} y={BASE - height} width="3" height={height} fill={GREEN} />;
    })}
    <polyline points={average(20)} stroke="#00ff00" />
    <polyline points={average(10)} stroke={MAGENTA} />
    <polyline points={average(5)} stroke="#ffff00" />
  </Drawing>
);

export default function App() {
  return (
    <Window>
      <Global />
      <TitleBar>
        <TitleMark width="5" height="12" viewBox="0 0 5 12" aria-hidden="true"><path d="M0 1l3 3-3 2zM0 6l5-2v4l-5 4z" fill="#c81414" /></TitleMark>
        <AppTitle>飞狐交易师 - [汇鸿集团 SH600981]</AppTitle>
        <CaptionButton aria-label="最小化"><svg width="10" height="10"><path d="M0 5.500h10" stroke="#000" /></svg></CaptionButton>
        <CaptionButton aria-label="还原"><svg width="10" height="10" fill="none" stroke="#000"><path d="M.5 2.500h7v7h-7zM2.500 2V.5h7v7H8" /></svg></CaptionButton>
        <CaptionButton aria-label="关闭"><svg width="10" height="10"><path d="M0 0l10 10M10 0L0 10" stroke="#000" /></svg></CaptionButton>
      </TitleBar>
      <MenuBar>
        <MenuMark width="12" height="14" viewBox="0 0 12 14" shapeRendering="crispEdges" aria-hidden="true">
          <path d="M-3 .5h14.500v13H-3z" fill="#fff" stroke="#202060" /><path d="M0 1.500h11" stroke="#202060" /><path d="M1.500 4v7M4.500 3v6M0 7.500h2M5 5.500h2" stroke="#e02020" /><path d="M7.500 4v7M9.500 5v7M7 6.500h3" stroke="#208020" />
        </MenuMark>
        {MENUS.map((m) => <MenuItem key={m}>{m}</MenuItem>)}
        <ChildControls>
          <ChildButton aria-label="最小化窗口"><svg width="8" height="8"><path d="M1 6h6" stroke="#000" strokeWidth="2" /></svg></ChildButton>
          <ChildButton aria-label="还原窗口"><svg width="9" height="9" fill="none" stroke="#000"><path d="M.5 3.500h5v5h-5zM3 3V1h5v5H6M.5 4h5M3 1.500h5" /></svg></ChildButton>
          <ChildButton aria-label="关闭窗口"><svg width="8" height="8"><path d="M1 1l6 6M7 1L1 7" stroke="#000" strokeWidth="1.500" /></svg></ChildButton>
        </ChildControls>
      </MenuBar>
      <Toolbar>
        <ToolGroup>
          <TextTool $w={93} $dim>{icons.grey}基本行情<Caret $dim /></TextTool>
          <TextTool $w={94}>{icons.windows}窗口布局<Caret /></TextTool>
          <Grip />
          <Tool $w={35} aria-label="folder">{icons.folder}<Caret /></Tool>
          <Tool aria-label="rows">{icons.rows}</Tool>
          <Tool aria-label="move">{icons.move}</Tool>
          <Tool aria-label="ruler">{icons.ruler}</Tool>
          <Tool $on $w={34}>权<Caret /></Tool>
          {VIEW_TOOLS.map((name) => <Tool key={name} $on={name === 'side'} aria-label={name}>{icons[name]}</Tool>)}
        </ToolGroup>
        <Grip />
        <ToolGroup>
          <Tool $on aria-label="draw">{icons.draw}</Tool>
          {DRAW_TOOLS.map((name) => <Tool key={name} $w={39} aria-label={name}>{icons[name]}<Caret /></Tool>)}
        </ToolGroup>
      </Toolbar>
      <Workspace>
        <Charts>
          <Pane>
            <Plot>
              <Clip>
                <Readout><Reading $tone="yellow">汇鸿集团</Reading></Readout>
                <Readout>
                  <Reading $tone="pale" $w={67}><Num>2005/11/21</Num></Reading>
                  {DAY.map(([label, value, arrow, tone, width]) => (
                    <Reading key={label} $tone={tone} $w={width}>{label}<Num>{value}</Num>{arrow}</Reading>
                  ))}
                </Readout>
              </Clip>
              <PriceDrawing />
            </Plot>
            <Axis>
              <AxisIcon><svg width="13" height="12" fill="none" stroke={FRAME} aria-hidden="true"><path d="M.5.5h12v10H.5zM8.500 0v11M0 6.500h8" /></svg></AxisIcon>
              <LevelList>
                {LEVELS.map(([percent, price]) => <Level key={percent}><span>{percent}</span><span>{price}</span></Level>)}
              </LevelList>
              <PriceTag>2.89</PriceTag>
            </Axis>
          </Pane>
          <TimeAxis>
            <Years>
              {YEARS.map(({ year, x }, i) => (
                <Year key={year} $grow={(YEARS[i + 1]?.x ?? PANE_W) - (i ? x : 0)} $first={i === 0}>{year}</Year>
              ))}
            </Years>
            <AxisName>节气线</AxisName>
          </TimeAxis>
          <Pane $fixed>
            <Plot>
              <Clip>
                <Readout>
                  <Reading $tone="pale" $w={78}><Num>VOL(5,10,20)</Num></Reading>
                  {AVERAGES.map(([value, arrow, tone]) => (
                    <Reading key={value} $tone={tone}><Num>{value}</Num>{arrow}</Reading>
                  ))}
                </Readout>
              </Clip>
              <VolumeDrawing />
            </Plot>
            <Axis>
              <VolumeScale>
                <VolumeLevel>400000</VolumeLevel>
                <VolumeLevel>200000</VolumeLevel>
                <VolumeFoot><Unit>X10</Unit><span>0</span></VolumeFoot>
              </VolumeScale>
            </Axis>
          </Pane>
        </Charts>
        <Quote>
          <QuoteHead>
            <Code>600981</Code><StockName>汇鸿集团</StockName><Sector>(800)</Sector>
            <svg width="16" height="16" aria-hidden="true"><path d="M0 0h16v16H0z" fill="#b4b4b4" /><path d="M7 4C1 5 1 11 7 13M4 9h5" stroke="#c03030" strokeWidth="2" fill="none" /><path d="M9 2L8 15M13 2l-3 10M6 4h8" stroke="#3c5c8c" strokeWidth="2" fill="none" /></svg>
          </QuoteHead>
          <Sheet $line={false}><tbody><PairRow row={['委比', '14.58%', 'red', '委差', '2627', 'red']} /></tbody></Sheet>
          <Ratio $split={55} />
          <BookRows rows={ASKS} />
          <Sheet><tbody><PairRow row={['最新', '2.89', 'red', '现手', '150', 'red']} tone="yellow" /></tbody></Sheet>
          <BookRows rows={BIDS} />
          <Sheet $line={false}><tbody>{STATS.map((row, i) => <PairRow key={row[0]} row={row} alt={i % 2 === 1} />)}</tbody></Sheet>
          <Ratio $split={58} />
          <Sheet><tbody><PairRow row={['外盘', '19932', 'red', '内盘', '14120', 'green']} /></tbody></Sheet>
          <TickArea>
            <TickTable>
              <tbody>
                {TICKS.map(([time, price, arrow, amount, tone, last], i) => (
                  <TickRow key={i} $last={last}>
                    <Time $minute={time.length > 3}>{time}</Time><Value $tone="red">{price}</Value>
                    <Trend $tone={arrow === '↓' ? 'green' : 'red'}>{arrow}</Trend><Value $tone={tone}>{amount}</Value>
                  </TickRow>
                ))}
              </tbody>
            </TickTable>
            <Scroll>
              <ScrollButton aria-label="固定"><svg width="11" height="9" stroke="#fff" aria-hidden="true"><path d="M0 4.500h6M6.500 1v7M8.500 2v5" /></svg></ScrollButton>
              <ScrollButton aria-label="向上"><svg width="7" height="6" aria-hidden="true"><path d="M3.500 0L7 6H0z" fill={FRAME} /></svg></ScrollButton>
            </Scroll>
          </TickArea>
        </Quote>
      </Workspace>
    </Window>
  );
}
